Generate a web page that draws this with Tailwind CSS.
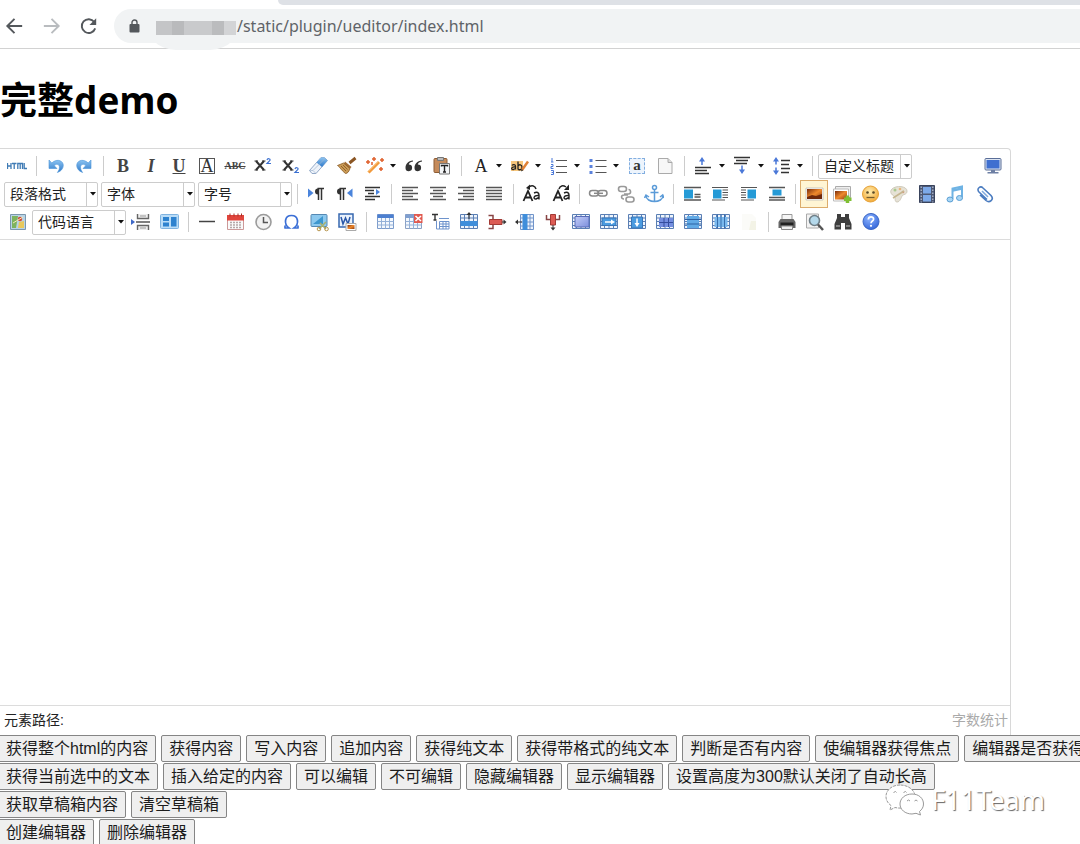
<!DOCTYPE html>
<html lang="zh-CN">
<head>
<meta charset="utf-8">
<meta name="viewport" content="width=device-width, initial-scale=1">
<title>完整demo</title>
<script src="https://cdn.jsdelivr.net/npm/@tailwindcss/browser@4"></script>
</head>
<body class="relative h-screen overflow-hidden bg-white text-black font-['Liberation_Sans','Noto_Sans_CJK_SC',sans-serif]">

<!-- shared gradients and symbols -->
<svg class="absolute size-0" aria-hidden="true">
  <defs>
    <linearGradient id="blue" x1="0" y1="0" x2="0" y2="1"><stop offset="0" stop-color="#8cc4f2"/><stop offset="1" stop-color="#2e78c8"/></linearGradient>
    <linearGradient id="sunset" x1="0" y1="0" x2="1" y2="1"><stop offset="0" stop-color="#7a2c0c"/><stop offset=".5" stop-color="#f08a2c"/><stop offset="1" stop-color="#8d3a10"/></linearGradient>
    <linearGradient id="lilac" x1="0" y1="0" x2="1" y2="1"><stop offset="0" stop-color="#c3cdf8"/><stop offset="1" stop-color="#7c8fdc"/></linearGradient>
    <radialGradient id="help" cx=".4" cy=".3" r=".8"><stop offset="0" stop-color="#8db4ff"/><stop offset="1" stop-color="#2c5fd6"/></radialGradient>
    <radialGradient id="face" cx=".45" cy=".35" r=".7"><stop offset="0" stop-color="#ffeeb0"/><stop offset="1" stop-color="#f2a52f"/></radialGradient>
    <symbol id="caret" viewBox="0 0 6 4"><path d="M0 0h6L3 3.5z" fill="#111"/></symbol>
    <symbol id="grid" viewBox="0 0 20 20"><path d="M1.500 2.500h17v14h-17z" fill="#eef4fc" stroke="#5a7fb4"/><path d="M1.500 6h17M1.500 9.500h17M1.500 13.500h17M5.500 2.500v14M14.500 2.500v14M10 2.500v14" stroke="#5a7fb4" fill="none"/></symbol>
  </defs>
</svg>

<header class="border-b border-[#d2d2d2]">
  <div class="ml-[278px] h-[5px] rounded-bl-md bg-[#dee1e6]"></div>
  <div class="flex h-[43px] items-center pb-[1px] text-[#5f6368]">
    <nav class="flex gap-[14px] pl-[3px]">
      <button type="button" aria-label="后退"><svg class="h-6 w-[23px]" viewBox="0 0 24 24" fill="none" stroke="#54585c" stroke-width="2"><path d="M20 12H5M12 4.500 4.500 12l7.500 7.500"/></svg></button>
      <button type="button" aria-label="前进"><svg class="h-6 w-[23px]" viewBox="0 0 24 24" fill="none" stroke="#b9bcbf" stroke-width="2"><path d="M4 12h15M12 4.500l7.500 7.500-7.500 7.500"/></svg></button>
      <button type="button" aria-label="刷新"><svg class="h-6 w-[23px]" viewBox="0 0 24 24"><path d="M18 7.800A7.200 7.200 0 1 0 19 14.500" fill="none" stroke="#54585c" stroke-width="2"/><path d="M20 4v7h-7z" fill="#54585c"/></svg></button>
    </nav>
    <div class="ml-[14px] flex h-[34px] grow items-center rounded-l-full bg-[#f1f3f4] pl-[15px]">
      <svg class="h-[14px] w-[11px]" viewBox="0 0 11 14"><rect x="0.500" y="5" width="10" height="8.500" rx="1" fill="#54585c"/><path d="M3 5.500V3.500a2.500 2.500 0 0 1 5 0v2" fill="none" stroke="#54585c" stroke-width="1.400"/></svg>
      <div class="-mb-[12px] ml-[4px] flex h-[36px] w-[98px] items-start rounded-b-[32px] bg-[#f1f3f4] pl-[12px] pt-[7px]">
        <div class="flex h-[14px] w-20">
          <i class="w-4 bg-[#c4c5c7]"></i><i class="w-3 bg-[#b9babc]"></i><i class="w-7 bg-[#c9cacc]"></i><i class="w-3 bg-[#bbbcbe]"></i><i class="w-3 bg-[#d3d4d6]"></i>
        </div>
      </div>
      <span class="-ml-[5px] whitespace-nowrap font-['Noto_Sans',sans-serif] text-[16px] leading-6">/static/plugin/ueditor/index.html</span>
    </div>
  </div>
</header>

<main>
  <h1 class="mt-6 mb-[22px] font-['Open_Sans','Noto_Sans_CJK_SC',sans-serif] text-[37px] leading-[53px] font-bold">完整demo</h1>

  <section class="mr-[69px] rounded-tr border-t border-r border-[#d8d8d8]">
    <div class="border-b border-[#dcdcdc] pt-[3px] pb-[3px] [&_button]:flex [&_button]:h-7 [&_button]:w-7 [&_button]:shrink-0 [&_button]:items-center [&_button]:justify-center [&_button>svg]:size-5 [&_hr]:h-5 [&_hr]:shrink-0 [&_hr]:border-0 [&_label]:relative [&_label]:h-[25px] [&_label]:w-[94px] [&_label]:shrink-0 [&_select]:size-full [&_select]:appearance-none [&_select]:rounded-[2px] [&_select]:border [&_select]:border-[#ccc] [&_select]:bg-white [&_select]:pl-[5px] [&_select]:text-[14px] [&_select]:leading-5 [&_select]:text-[#222] [&_label>span]:pointer-events-none [&_label>span]:absolute [&_label>span]:inset-y-0 [&_label>span]:right-0 [&_label>span]:flex [&_label>span]:w-3 [&_label>span]:items-center [&_label>span]:justify-center [&_label>span]:border-l [&_label>span]:border-[#ccc] [&_label_svg]:h-1 [&_label_svg]:w-[6px]">

      <!-- row 1 -->
      <div class="flex h-7 items-center pl-[3px] [&_hr]:w-[11px] [&_hr]:bg-[linear-gradient(#ccc,#ccc)] [&_hr]:bg-[size:1px_100%] [&_hr]:bg-[position:5px_0] [&_hr]:bg-no-repeat [&_.drop]:w-[11px] [&_.drop]:justify-start [&_.drop]:pl-[1px] [&_.drop>svg]:h-1 [&_.drop>svg]:w-[6px]">
        <button type="button" aria-label="源代码"><svg viewBox="0 0 20 20"><path d="M.5 7v6M4 7v6M.5 10H4M5 7.500h4.500M7.200 7.500V13M10.800 13V7.500h4.700V13M13.200 7.500V13M17.200 7v5.500H20" fill="none" stroke="#3f7bb5" stroke-width="1.300"/></svg></button>
        <hr>
        <button type="button" aria-label="撤销"><svg viewBox="0 0 20 20"><path d="M3 4v8.500h8L8.300 9.800C10 7.500 13 8 13.400 10.500c.3 2-.5 4-2 6C16 15 18 11 17 7.800 15.800 4 10 2.800 5.800 7z" fill="url(#blue)" stroke="#4a93d8" stroke-width=".6"/></svg></button>
        <button type="button" aria-label="重做"><svg viewBox="0 0 20 20"><path d="M17 4v8.500H9l2.700-2.700C10 7.500 7 8 6.600 10.500c-.3 2 .5 4 2 6C4 15 2 11 3 7.800 4.200 4 10 2.800 14.200 7z" fill="url(#blue)" stroke="#4a93d8" stroke-width=".6"/></svg></button>
        <hr>
        <button type="button" class="font-['Liberation_Serif',serif] text-[18px] leading-5 font-bold text-[#444]">B</button>
        <button type="button" class="font-['Liberation_Serif',serif] text-[18px] leading-5 font-bold text-[#444] italic">I</button>
        <button type="button" class="font-['Liberation_Serif',serif] text-[18px] leading-5 font-bold text-[#444] underline">U</button>
        <button type="button" class="font-['Liberation_Serif',serif] text-[18px] leading-5 text-[#333]"><span class="flex size-4 items-center justify-center border border-[#555]">A</span></button>
        <button type="button" class="font-['Liberation_Serif',serif] text-[10px] leading-5 font-bold text-[#444] line-through">ABC</button>
        <button type="button" aria-label="上标"><svg viewBox="0 0 20 20"><path d="M3 5l8 9M11 5l-8 9" stroke="#333" stroke-width="2"/><path d="M1.500 5H5M9 5h3.500M1.500 14H5M9 14h3.500" stroke="#333"/><path d="M14 4c.5-2 3.500-1.500 3 .3L14 7.500h4" fill="none" stroke="#3a6fd0" stroke-width="1.200"/></svg></button>
        <button type="button" aria-label="下标"><svg viewBox="0 0 20 20"><path d="M3 5l8 9M11 5l-8 9" stroke="#333" stroke-width="2"/><path d="M1.500 5H5M9 5h3.500M1.500 14H5M9 14h3.500" stroke="#333"/><path d="M14 13c.5-2 3.500-1.500 3 .3L14 16.500h4" fill="none" stroke="#3a6fd0" stroke-width="1.200"/></svg></button>
        <button type="button" aria-label="清除格式"><svg viewBox="0 0 20 20"><path d="M12 1.500h3.500l3 3L7 17.500H3l-2.500-3z" fill="#eef3fa" stroke="#93a9c8"/><path d="M12 1.500h3.500l3 3-5.500 6.500-5.500-4.500z" fill="url(#blue)"/><path d="M.5 14.500H4l3 3M4 14.500L16 2.500" stroke="#a4b8d0" fill="none" stroke-width=".7"/></svg></button>
        <button type="button" aria-label="格式刷"><svg viewBox="0 0 20 20"><path d="M18.500 2l-6 5" stroke="#8a5523" stroke-width="3"/><path d="M8 5.500l6.500 5.500-2 2-6-4.500z" fill="#a36c33"/><path d="M6.500 7L.5 9.500c2 1 3 4 8 8 2 0 3.500-2 4.500-5z" fill="#c99a55" stroke="#8a5c28" stroke-width=".8"/><path d="M4 10l5 5M6 9l4.500 4.500" stroke="#855420" stroke-width=".8"/></svg></button>
        <button type="button" aria-label="自动排版"><svg viewBox="0 0 20 20"><path d="M3.500 16.500L14 6" stroke="#f29a3c" stroke-width="3"/><path d="M3 15.500L13.500 5" stroke="#ffd596"/><path d="M3 4v4M1 6h4M9 1v4M7 3h4M17 2v4M15 4h4M16 11v4M14 13h4M7 6v3" stroke="#e0602c" stroke-width="1.500"/></svg></button><button type="button" class="drop" aria-label="自动排版选项"><svg><use href="#caret"/></svg></button>
        <button type="button" aria-label="引用"><svg viewBox="0 0 20 20"><path d="M9 5.500C6 6 4.800 7.500 4.800 8.600A3.300 3.300 0 1 1 1.500 12C1.500 8 4 5 9 4.500zM18 5.500c-3 .500-4.200 2-4.200 3.100A3.300 3.300 0 1 1 10.500 12c0-4 2.500-7 7.500-7.500z" fill="#333"/></svg></button>
        <button type="button" aria-label="纯文本粘贴"><svg viewBox="0 0 20 20"><rect x="2" y="2.500" width="13" height="14" rx="1" fill="#c58b5b" stroke="#8d5c34"/><path d="M5.500 1.500h6v3h-6z" fill="#bbb" stroke="#777"/><path d="M7.500 7.500h10v10.500h-10z" fill="#f4f6f8" stroke="#777"/><path d="M9.500 10.500v-1h6v1M12.500 9.500V16M11 16h3" fill="none" stroke="#222" stroke-width="1.400"/></svg></button>
        <hr>
        <button type="button" class="font-['Liberation_Serif',serif] text-[18px] leading-5 text-[#222]">A</button><button type="button" class="drop" aria-label="字体颜色选项"><svg><use href="#caret"/></svg></button>
        <button type="button" aria-label="背景色"><svg viewBox="0 0 20 20"><path d="M1 5h12v10H1z" fill="#f7c67c"/><path d="M2 9.500c1-1.500 3.500-1 3.500.5v3.500M5.500 11c-5-.500-4.500 3-2 2.500l2-1M8 5.500v8M8 10c1-2 4-1.500 4 1.200S9 14.500 8 12.800" fill="none" stroke="#222" stroke-width="1.300"/><path d="M12 14l6-8.500" stroke="#e08236" stroke-width="2.500"/><path d="M11 15.500l.5-2.500 1.800 1.300z" fill="#333"/></svg></button><button type="button" class="drop" aria-label="背景色选项"><svg><use href="#caret"/></svg></button>
        <button type="button" aria-label="有序列表"><svg viewBox="0 0 20 20"><path d="M7 4.500h11M7 10.500h11M7 16.500h11" stroke="#555" stroke-width="1.200"/><path d="M3 2v4M2 6h2.500M2 8.500h2v2H2v2h2.500M2 14.500h2.500v4H2M2.500 16.500h2" fill="none" stroke="#4a78d8"/></svg></button><button type="button" class="drop" aria-label="有序列表选项"><svg><use href="#caret"/></svg></button>
        <button type="button" aria-label="无序列表"><svg viewBox="0 0 20 20"><path d="M7.500 4.500h11M7.500 10.500h11M7.500 16.500h11" stroke="#555" stroke-width="1.200"/><path d="M1.500 3h3v3h-3zM1.500 9h3v3h-3zM1.500 15h3v3h-3z" fill="#5b82dc"/></svg></button><button type="button" class="drop" aria-label="无序列表选项"><svg><use href="#caret"/></svg></button>
        <button type="button" class="font-['Liberation_Serif',serif] text-[15px] leading-4 font-bold text-[#333]"><span class="flex size-4 items-center justify-center border border-dashed border-[#82aee0] bg-[#edf4fc] pb-[2px]">a</span></button>
        <button type="button" aria-label="清空文档"><svg viewBox="0 0 20 20"><path d="M3.500 2.500h9.500l4 4v11H3.500z" fill="#f7f7f7" stroke="#aaa"/><path d="M13 2.500v4h4" fill="#ddd" stroke="#aaa"/></svg></button>
        <hr>
        <button type="button" aria-label="段前距"><svg viewBox="0 0 20 20"><path d="M1 11.500h16M1 14.500h12M1 17.500h14" stroke="#333" stroke-width="1.500"/><path d="M8 9V4" stroke="#4a78d8" stroke-width="1.500"/><path d="M5 5.500L8 1l3 4.500z" fill="#4a78d8"/></svg></button><button type="button" class="drop" aria-label="段前距选项"><svg><use href="#caret"/></svg></button>
        <button type="button" aria-label="段后距"><svg viewBox="0 0 20 20"><path d="M1 1.500h16M3 4.500h12M1 7.500h13" stroke="#333" stroke-width="1.500"/><path d="M9 9.500V15" stroke="#4a78d8" stroke-width="1.500"/><path d="M6 13.500L9 18l3-4.500z" fill="#4a78d8"/></svg></button><button type="button" class="drop" aria-label="段后距选项"><svg><use href="#caret"/></svg></button>
        <button type="button" aria-label="行间距"><svg viewBox="0 0 20 20"><path d="M9 4.500h9M9 8.500h8M9 12.500h9M9 16.500h8" stroke="#333" stroke-width="1.500"/><path d="M4 8.500V4M4 11.500V16" stroke="#4a78d8" stroke-width="1.500"/><path d="M1 5.500L4 1l3 4.500zM1 14.500L4 19l3-4.500z" fill="#4a78d8"/></svg></button><button type="button" class="drop" aria-label="行间距选项"><svg><use href="#caret"/></svg></button>
        <hr>
        <label><select aria-label="自定义标题"><option>自定义标题</option></select><span><svg><use href="#caret"/></svg></span></label>
        <button type="button" class="mr-[3px] ml-auto" aria-label="全屏"><svg viewBox="0 0 20 20"><rect x="2" y="2.500" width="16" height="11.500" rx="1" fill="#dde5f2" stroke="#5a6e98"/><path d="M3.500 4h13v8.500h-13z" fill="#3f6fd0"/><path d="M8 14h4v2H8zM4.500 16h11v1.500h-11z" fill="#6d7fa4"/></svg></button>
      </div>

      <!-- row 2 -->
      <div class="flex h-7 items-center pl-1 [&_hr]:w-[10px] [&_hr]:bg-[linear-gradient(#ccc,#ccc)] [&_hr]:bg-[size:1px_100%] [&_hr]:bg-[position:5px_0] [&_hr]:bg-no-repeat">
        <div class="flex gap-[3px]">
          <label><select aria-label="段落格式"><option>段落格式</option></select><span><svg><use href="#caret"/></svg></span></label>
          <label><select aria-label="字体"><option>字体</option></select><span><svg><use href="#caret"/></svg></span></label>
          <label><select aria-label="字号"><option>字号</option></select><span><svg><use href="#caret"/></svg></span></label>
        </div>
        <hr>
        <button type="button" aria-label="从左向右输入"><svg viewBox="0 0 20 20"><path d="M2 4.500v9L7.500 9z" fill="#4a84dc"/><path d="M12 4.500a3 3 0 0 0 0 6z" fill="#333"/><path d="M12.500 4.500V16M15.500 4.500V16M11.500 4.500H18" stroke="#333" stroke-width="1.500"/></svg></button>
        <button type="button" aria-label="从右向左输入"><svg viewBox="0 0 20 20"><path d="M18.500 4.500v9L13 9z" fill="#4a84dc"/><path d="M6 4.500a3 3 0 0 0 0 6z" fill="#333"/><path d="M6.500 4.500V16M9.500 4.500V16M5.500 4.500H12" stroke="#333" stroke-width="1.500"/></svg></button>
        <button type="button" aria-label="首行缩进"><svg viewBox="0 0 20 20"><path d="M3 3.500h15M3 6.500h9M6 9.500h6M3 12.500h15M3 15.500h10" stroke="#333" stroke-width="1.500"/><path d="M14 5v6l4-3z" fill="#4a84dc"/></svg></button>
        <hr>
        <button type="button" aria-label="居左对齐"><svg viewBox="0 0 20 20"><path d="M2 3.500h16M2 6.500h11M2 9.500h16M2 12.500h11M2 15.500h16" stroke="#555" stroke-width="1.300"/></svg></button>
        <button type="button" aria-label="居中对齐"><svg viewBox="0 0 20 20"><path d="M2 3.500h16M5 6.500h10M2 9.500h16M5 12.500h10M2 15.500h16" stroke="#555" stroke-width="1.300"/></svg></button>
        <button type="button" aria-label="居右对齐"><svg viewBox="0 0 20 20"><path d="M2 3.500h16M7 6.500h11M2 9.500h16M7 12.500h11M2 15.500h16" stroke="#555" stroke-width="1.300"/></svg></button>
        <button type="button" aria-label="两端对齐"><svg viewBox="0 0 20 20"><path d="M2 3.500h16M2 6.500h16M2 9.500h16M2 12.500h16M2 15.500h16" stroke="#555" stroke-width="1.300"/></svg></button>
        <hr>
        <button type="button" aria-label="字母大写"><svg viewBox="0 0 20 20"><path d="M1.500 17L6 7l4.500 10M3 13.500h6" fill="none" stroke="#222" stroke-width="1.800"/><path d="M12 9c3-1.500 5-.500 5 2v4.500M17 11.500c-6-.500-6 4-3 3.500l3-1.500" fill="none" stroke="#222" stroke-width="1.400"/><path d="M14 5c-1-3.500-4-4-7-2" fill="none" stroke="#222" stroke-width="1.500"/><path d="M8 .5V6L4 4z" fill="#222"/></svg></button>
        <button type="button" aria-label="字母小写"><svg viewBox="0 0 20 20" class="ml-[4px]"><path d="M1.500 17L6 7l4.500 10M3 13.500h6" fill="none" stroke="#222" stroke-width="1.800"/><path d="M12 9c3-1.500 5-.500 5 2v4.500M17 11.500c-6-.500-6 4-3 3.500l3-1.500" fill="none" stroke="#222" stroke-width="1.400"/><path d="M7 5c1-3.500 4-4 7-2" fill="none" stroke="#222" stroke-width="1.500"/><path d="M12 6h5V.5z" fill="#222"/></svg></button>
        <hr>
        <button type="button" aria-label="超链接"><svg viewBox="0 0 20 20" fill="none" stroke="#888" stroke-width="1.500"><rect x="1.500" y="6.500" width="9" height="5.500" rx="2.700"/><rect x="10" y="6.500" width="9" height="5.500" rx="2.700"/><path d="M6 9.300h9"/></svg></button>
        <button type="button" aria-label="取消链接"><svg viewBox="0 0 20 20" fill="none" stroke="#999" stroke-width="1.600"><rect x="2.500" y="2.500" width="8" height="5" rx="2.500"/><rect x="10" y="13" width="8" height="5" rx="2.500"/><path d="M8 10h4.500c3 0 2.500-4.500 0-4.500M12 11H8c-3.500 0-3 4 0 4"/></svg></button>
        <button type="button" aria-label="锚点"><svg viewBox="0 0 20 20" fill="none" stroke="#5b9bd8" stroke-width="1.500"><circle cx="10.500" cy="3.500" r="2"/><path d="M10.500 5.500V18M6.500 8.500h8M2 11.500c0 8 17 8 17 0M.5 14l1.500-3 3 2M20 14l-1.300-3-2.700 2"/></svg></button>
        <hr>
        <button type="button" aria-label="左浮动"><svg viewBox="0 0 20 20"><path d="M2 3.500h17M12.500 10.500h6M12.500 13h6M2 16h17" stroke="#555" stroke-width="1.300"/><path d="M2 5.500h9v9H2z" fill="#259ad6"/></svg></button>
        <button type="button" aria-label="文字环绕左"><svg viewBox="0 0 20 20"><path d="M2 3.500h16M12.500 6H18M12.500 8.500H18M12.500 11H18M12.500 13.500H18M2 16h13" stroke="#555" stroke-width="1.200"/><path d="M3 5.500h8.500v9H3z" fill="#259ad6"/></svg></button>
        <button type="button" aria-label="右浮动"><svg viewBox="0 0 20 20"><path d="M3 3.500h16M3 6h5M3 8.500h5M3 11h5M3 13.500h5M3 16h13" stroke="#555" stroke-width="1.200"/><path d="M9.500 5.500H18v9H9.500z" fill="#259ad6"/></svg></button>
        <button type="button" aria-label="居中"><svg viewBox="0 0 20 20"><path d="M3 3.500h16M3 13.500h16M3 16h16" stroke="#555" stroke-width="1.300"/><path d="M6.500 5.500h9v6h-9z" fill="#259ad6"/></svg></button>
        <hr>
        <button type="button" class="border border-[#dcac6c] bg-[#fff5d4]" aria-label="单图上传"><svg viewBox="0 0 20 20"><path d="M2 4h17v12H2z" fill="#fff" stroke="#bbb" stroke-width=".8"/><path d="M3 5h15v10H3z" fill="url(#sunset)"/><path d="M3 13l5-2 4 1 6-2v5H3z" fill="#70290b"/></svg></button>
        <button type="button" aria-label="多图上传"><svg viewBox="0 0 20 20"><path d="M3.500 2.500h15v11h-15z" fill="#eee" stroke="#aaa"/><path d="M1.500 5h15v12h-15z" fill="#fff" stroke="#bbb"/><path d="M3 7h12v8.500H3z" fill="url(#sunset)"/><path d="M15.500 11.500v7.500M12 15.300h7.500" stroke="#7fbf33" stroke-width="3.500"/></svg></button>
        <button type="button" aria-label="表情"><svg viewBox="0 0 20 20"><circle cx="10.500" cy="10" r="8" fill="url(#face)" stroke="#e5a23a"/><circle cx="7.500" cy="8.500" r="1.300" fill="#5b4a28"/><circle cx="13.500" cy="8.500" r="1.300" fill="#5b4a28"/><path d="M6.500 13.500h8" stroke="#765c2d" stroke-width="1.300"/></svg></button>
        <button type="button" aria-label="涂鸦"><svg viewBox="0 0 20 20"><path d="M4 5c4-4 15-3 15 2 0 4-4 3-5 5s-2 6-5 6-1-5-3-6-5-4-2-7z" fill="#e6e2d6" stroke="#cfcabb"/><circle cx="7" cy="6" r="1.500" fill="#a9c98e"/><circle cx="12" cy="5" r="1.300" fill="#e8b77c"/><circle cx="15" cy="8" r="1.300" fill="#d98f7d"/><path d="M5 14l11-7" stroke="#c5b68f" stroke-width="1.500"/></svg></button>
        <button type="button" aria-label="视频"><svg viewBox="0 0 20 20"><path d="M3.500 1.500h15v17h-15z" fill="#4d5874" stroke="#39435c"/><path d="M7 3h8v6.500H7zM7 11h8v6.500H7z" fill="#7da9e8"/><path d="M5.200 2.500v16M16.800 2.500v16" stroke="#b8c2d4" stroke-width="1.200" stroke-dasharray="1.500 1.500"/></svg></button>
        <button type="button" aria-label="音乐"><svg viewBox="0 0 20 20"><path d="M8.500 15V4.500L18 2.500V13" fill="none" stroke="#6fb3e4" stroke-width="2"/><path d="M8.500 6.500L18 4.500" stroke="#6fb3e4" stroke-width="2.500"/><ellipse cx="6" cy="15.500" rx="3" ry="2.500" fill="#a8d6f5" stroke="#5c9fd4"/><ellipse cx="15.500" cy="14" rx="3" ry="2.500" fill="#a8d6f5" stroke="#5c9fd4"/></svg></button>
        <button type="button" class="ml-[2px]" aria-label="附件"><svg viewBox="0 0 20 20"><path d="M13 15.500L5 8c-3-3.500 1.500-6.500 4-4l8 7.500c3.500 4-1.500 8-5 5L6 11" fill="none" stroke="#4b7cc0" stroke-width="1.600"/><path d="M14 13L8 7" stroke="#80a9dc" stroke-width="1.600"/></svg></button>
      </div>

      <!-- row 3 -->
      <div class="flex h-7 items-center pl-1 [&_hr]:w-[10px] [&_hr]:bg-[linear-gradient(#ccc,#ccc)] [&_hr]:bg-[size:1px_100%] [&_hr]:bg-[position:5px_0] [&_hr]:bg-no-repeat">
        <button type="button" aria-label="地图"><svg viewBox="0 0 20 20"><path d="M2.500 2.500h15v15h-15z" fill="#b8d3e6" stroke="#7b97ac"/><path d="M4 4h6l-2 12H4z" fill="#7eb35d"/><path d="M11 10l5-1v7h-6z" fill="#e8c95d"/><circle cx="12" cy="7" r="2.200" fill="#d34a35"/><path d="M5 11l10-6" stroke="#f4e8b8"/></svg></button>
        <label><select aria-label="代码语言"><option>代码语言</option></select><span><svg><use href="#caret"/></svg></span></label>
        <button type="button" class="ml-[1px]" aria-label="分页"><svg viewBox="0 0 20 20"><path d="M0 7v6l4-3z" fill="#3f69c8"/><path d="M5 10h14" stroke="#555" stroke-width="1.500"/><path d="M6.500 2v4.500h11V2M6.500 18v-4.500h11V18" fill="#eee" stroke="#666" stroke-width="1.400"/><path d="M9 4h6M9 16h6" stroke="#999"/></svg></button>
        <button type="button" aria-label="模板"><svg viewBox="0 0 20 20"><rect x="1.500" y="2.500" width="18" height="14" rx="1" fill="#b9dcf7" stroke="#7fb3e0"/><path d="M4 5h6v4H4zM4 10.500h6v4H4zM12 5h5.500v9.500H12z" fill="#2d82cf"/></svg></button>
        <hr>
        <button type="button" aria-label="分隔线"><svg viewBox="0 0 20 20"><path d="M2 9.500h16" stroke="#444" stroke-width="1.500"/></svg></button>
        <button type="button" aria-label="日期"><svg viewBox="0 0 20 20"><path d="M2.500 3.500h16v14h-16z" fill="#fafafa" stroke="#c99"/><path d="M2 3h17v5.500H2z" fill="#e0453c"/><path d="M5 1.500v3M9 1.500v3M13 1.500v3M16.500 1.500v3" stroke="#aa3028"/><path d="M5 10.500h11M5 13h11M5 15.500h11" stroke="#b5a8a8" stroke-width="1.300" stroke-dasharray="2 1"/></svg></button>
        <button type="button" aria-label="时间"><svg viewBox="0 0 20 20"><circle cx="10.500" cy="10" r="7.500" fill="#f2f2f2" stroke="#9b9b9b" stroke-width="1.600"/><path d="M10.500 5v5.500H15" fill="none" stroke="#555" stroke-width="1.500"/></svg></button>
        <button type="button" aria-label="特殊字符"><svg viewBox="0 0 20 20"><path d="M3.500 16h4.500C2.500 12 3.500 3.500 10.500 3.500S18.500 12 13 16h4.500M4 13.500V16.500M17 13.500v3" fill="none" stroke="#3b6fd6" stroke-width="1.700"/></svg></button>
        <button type="button" aria-label="截图"><svg viewBox="0 0 20 20"><rect x="2" y="2.500" width="16" height="12" rx="1" fill="#8cc8ee" stroke="#5588b3"/><path d="M4 12L14 4v8z" fill="#3c96cf"/><path d="M10 17l7-7M11 11l6 6" stroke="#a8b070" stroke-width="1.600"/><circle cx="10" cy="17" r="1.800" fill="none" stroke="#b8954d"/><circle cx="17.500" cy="17" r="1.800" fill="none" stroke="#b8954d"/></svg></button>
        <button type="button" aria-label="图片转存"><svg viewBox="0 0 20 20"><path d="M2 2h14v13H2z" fill="#eaf2fc" stroke="#3768b0" stroke-width="1.500"/><path d="M4 5l2 7 2.500-6L11 12l2-7" fill="none" stroke="#2856a8" stroke-width="1.500"/><path d="M9 11.500h10v7H9z" fill="#fff" stroke="#aaa"/><path d="M10.500 13h7v4h-7z" fill="url(#sunset)"/></svg></button>
        <hr>
        <button type="button" aria-label="插入表格"><svg viewBox="0 0 20 20"><path d="M2.500 2.500h16v14h-16z" fill="#f4f8fd" stroke="#7c9ccb"/><path d="M2.500 2.500h16v3.500h-16z" fill="#4c7fd0"/><path d="M2.500 9.500h16M2.500 13h16M6.500 6v10.500M10.500 6v10.500M14.500 6v10.500" stroke="#94b1d8"/></svg></button>
        <button type="button" aria-label="删除表格"><svg viewBox="0 0 20 20"><path d="M2.500 2.500h16v14h-16z" fill="#f4f8fd" stroke="#8aa0c3"/><path d="M2.500 2.500h16v3.500h-16z" fill="#7f9fd0"/><path d="M2.500 9.500h16M2.500 13h16M6.500 6v10.500M10.500 6v10.500M14.500 6v10.500" stroke="#94b1d8"/><path d="M11 2h8.500v9H11z" fill="#e05a50"/><path d="M12.500 4l5.500 5M18 4l-5.500 5" stroke="#fff" stroke-width="1.600"/></svg></button>
        <button type="button" aria-label="表格前插入行"><svg viewBox="0 0 20 20"><path d="M1 2.500h6M4 2.500V8M2.500 8h3" stroke="#333" stroke-width="1.400" fill="none"/><path d="M5.500 9v8h3M8 6.500h10M8.500 9.500H18v7.500H8.500zM8.500 12H18M8.500 14.500H18M12 9.500V17M15 9.500V17" fill="none" stroke="#6e93cc"/></svg></button>
        <button type="button" aria-label="前插入行"><svg viewBox="0 0 20 20"><use href="#grid"/><path d="M1.500 9h17v5h-17z" fill="#3f8edb"/><path d="M10 7V1" stroke="#333"/><path d="M7.500 3L10 0l2.500 3z" fill="#333"/></svg></button>
        <button type="button" aria-label="删除行"><svg viewBox="0 0 20 20"><path d="M1.500 3.500H6v3.500M1.500 16.500H6V13" fill="none" stroke="#844" stroke-width="1.500"/><path d="M2.500 7.500H15v5H2.500z" fill="#dc5b54" stroke="#a33a35"/><path d="M15 10h3" stroke="#333"/><path d="M16.500 7.500L19.500 10l-3 2.500z" fill="#333"/></svg></button>
        <button type="button" aria-label="前插入列"><svg viewBox="0 0 20 20"><path d="M5.500 2.500h13v15h-13zM5.500 6h13M5.500 10h13M5.500 14h13M15 2.500v15" fill="#eef4fc" stroke="#7094ca"/><path d="M7.500 2h5v16h-5z" fill="#3f8edb"/><path d="M7 10H1" stroke="#333"/><path d="M3 7.500L0 10l3 2.500z" fill="#333"/></svg></button>
        <button type="button" aria-label="删除列"><svg viewBox="0 0 20 20"><path d="M3.500 3v4.500H7M16.500 3v4.500H13" fill="none" stroke="#844" stroke-width="1.500"/><path d="M7.500 2.500h5v10.500h-5z" fill="#dc5b54" stroke="#a33a35"/><path d="M10 13v4" stroke="#333"/><path d="M7.500 15.500L10 18.500l2.500-3z" fill="#333"/></svg></button>
        <button type="button" aria-label="合并多个单元格"><svg viewBox="0 0 20 20"><use href="#grid"/><path d="M4 4.500h14v10.500H4z" fill="url(#lilac)" stroke="#596cb8"/></svg></button>
        <button type="button" aria-label="右合并单元格"><svg viewBox="0 0 20 20"><use href="#grid"/><path d="M3 6h14v7.500H3z" fill="#4b9be0" stroke="#3976b8"/><path d="M6 10h7" stroke="#fff" stroke-width="1.500"/><path d="M12 7.500l4 2.500-4 2.500z" fill="#fff"/></svg></button>
        <button type="button" aria-label="下合并单元格"><svg viewBox="0 0 20 20"><use href="#grid"/><path d="M4.500 5h11v11h-11z" fill="#4b9be0" stroke="#3976b8"/><path d="M10 6.500V12" stroke="#fff" stroke-width="1.500"/><path d="M7.500 11L10 15l2.500-4z" fill="#fff"/></svg></button>
        <button type="button" aria-label="拆分单元格"><svg viewBox="0 0 20 20"><use href="#grid"/><path d="M4 6h14v9H4z" fill="#748ee0"/><path d="M4 10.500h14M9 6v9M13.500 6v9" stroke="#344d9e"/></svg></button>
        <button type="button" aria-label="拆分成行"><svg viewBox="0 0 20 20"><use href="#grid"/><path d="M4 4h12v12H4z" fill="#61aae6"/><path d="M2 7.500h16M2 12h16" stroke="#2d62a4"/></svg></button>
        <button type="button" aria-label="拆分成列"><svg viewBox="0 0 20 20"><use href="#grid"/><path d="M3.500 5h13v10h-13z" fill="#79b8ed"/><path d="M6.500 2.500v14M10 2.500v14M13.500 2.500v14" stroke="#376ead"/></svg></button>
        <button type="button" aria-label="图表"><svg viewBox="0 0 20 20"><path d="M3 2h10l4 4v12H3z" fill="#fbfbf8"/><path d="M12 9h5v9h-7z" fill="#f3f3e6"/></svg></button>
        <hr>
        <button type="button" aria-label="打印"><svg viewBox="0 0 20 20"><path d="M5 7V2.500h10V7" fill="#f6f6f6" stroke="#999"/><path d="M3.500 7h13l2 3v6h-17v-6z" fill="#666"/><path d="M3.500 10.500h13v3h-13z" fill="#222"/><path d="M4.500 14h11v3.500h-11z" fill="#eee" stroke="#888"/></svg></button>
        <button type="button" aria-label="预览"><svg viewBox="0 0 20 20"><path d="M1.500 2h12v14h-12z" fill="#f3f3f3" stroke="#aaa"/><circle cx="9.500" cy="8.500" r="5" fill="#b4d8ea" stroke="#6f7f88" stroke-width="1.600"/><path d="M13 12.500l5 5.500" stroke="#555" stroke-width="2.500"/></svg></button>
        <button type="button" aria-label="查询替换"><svg viewBox="0 0 20 20"><path d="M4 2h4v3h4V2h4v4l2.500 6v5.500H12V11H8v6.500H1.500V12L4 6z" fill="#3e3e3e"/><path d="M3 14h4M13 14h4" stroke="#999" stroke-width="1.300"/></svg></button>
        <button type="button" aria-label="帮助"><svg viewBox="0 0 20 20"><circle cx="10" cy="9.500" r="8" fill="url(#help)" stroke="#3a66c4"/><path d="M7.300 7.500c.2-3.500 5.500-3.300 5.300-.3-.1 1.800-2.600 1.800-2.600 4" fill="none" stroke="#fff" stroke-width="1.700"/><circle cx="10" cy="13.800" r="1.100" fill="#fff"/></svg></button>
      </div>
    </div>

    <div class="h-[465px]" contenteditable="true" role="textbox" aria-label="编辑区"></div>

    <div class="flex h-[30px] justify-between border-t border-[#dcdcdc] pr-[2px] pl-1 text-[14px] leading-7">
      <span class="text-[#222]">元素路径:</span>
      <span class="text-[#aaa]">字数统计</span>
    </div>
  </section>

  <div class="-ml-[2px] flex flex-col gap-px text-[16px] leading-[26px] whitespace-nowrap text-[#1c1c1c] [&>div]:flex [&>div]:gap-[5px] [&_button]:h-[27px] [&_button]:shrink-0 [&_button]:rounded-[2px] [&_button]:border [&_button]:border-[#858585] [&_button]:bg-[#efefef] [&_button]:px-[7px]">
    <div>
      <button type="button">获得整个html的内容</button>
      <button type="button">获得内容</button>
      <button type="button">写入内容</button>
      <button type="button">追加内容</button>
      <button type="button">获得纯文本</button>
      <button type="button">获得带格式的纯文本</button>
      <button type="button">判断是否有内容</button>
      <button type="button">使编辑器获得焦点</button>
      <button type="button">编辑器是否获得焦点</button>
    </div>
    <div>
      <button type="button">获得当前选中的文本</button>
      <button type="button">插入给定的内容</button>
      <button type="button">可以编辑</button>
      <button type="button">不可编辑</button>
      <button type="button">隐藏编辑器</button>
      <button type="button">显示编辑器</button>
      <button type="button">设置高度为300默认关闭了自动长高</button>
    </div>
    <div>
      <button type="button">获取草稿箱内容</button>
      <button type="button">清空草稿箱</button>
    </div>
    <div>
      <button type="button">创建编辑器</button>
      <button type="button">删除编辑器</button>
    </div>
  </div>
</main>

<!-- watermark over the page corner -->
<div class="pointer-events-none absolute right-[35px] bottom-[28px] flex items-center gap-[6px]">
  <svg class="h-8 w-10" viewBox="0 0 40 32" fill="#fff" stroke="#999" stroke-width="1"><path d="M15 1C7 1 1 6 1 12.500c0 4 2 6.800 5 9L5 26l5-2.500c10 2.500 20-3 20-11C30 6 23 1 15 1z" stroke-dasharray="3 1"/><path d="M27 10c-7 0-12 4.500-12 10s5 10 12 10l4-.700L35.500 31l-1-3.500C37 25.500 38.500 23 38.500 20 38.500 14.500 34 10 27 10z"/><path d="M8.500 8.500l2-1 1 1M18.500 8.500l2-1 1 1M22 17l1.500-1 1.500 1M29.500 17l1.500-1 1.500 1" fill="none"/></svg>
  <span class="font-['Noto_Sans',sans-serif] text-[27px] leading-8 text-white [text-shadow:1px_1px_1px_#666]">F11Team</span>
</div>
</body>
</html>
